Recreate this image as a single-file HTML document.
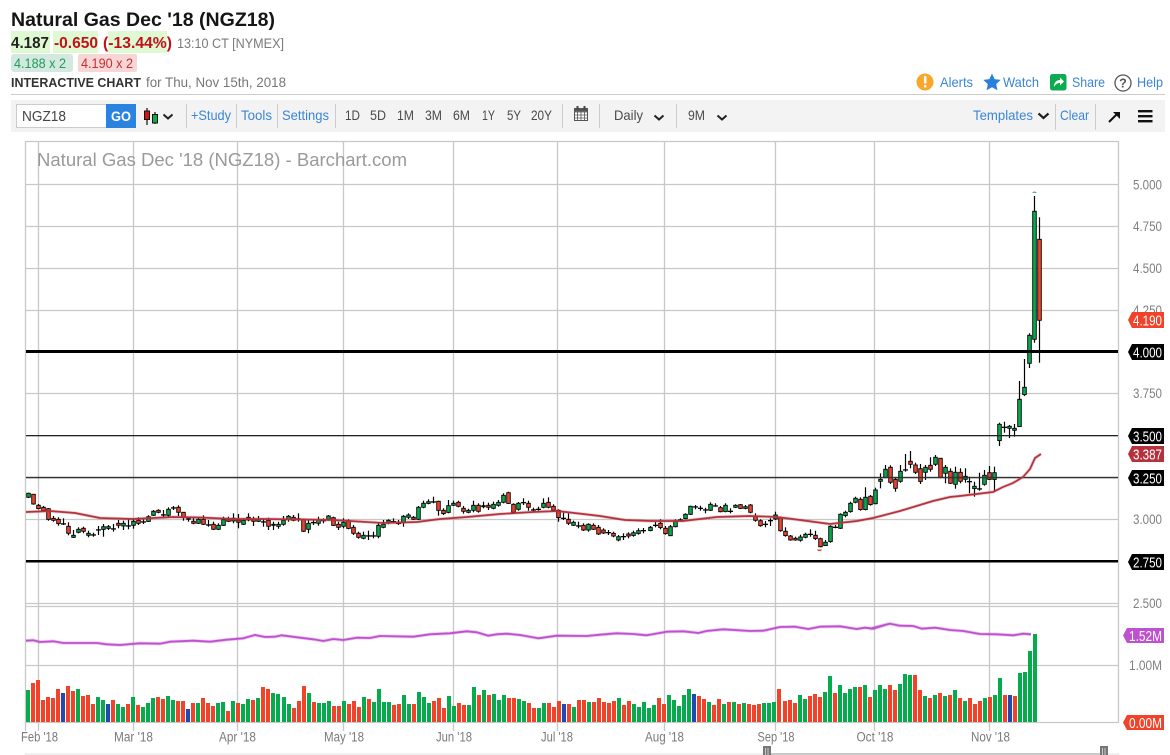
<!DOCTYPE html>
<html><head><meta charset="utf-8"><title>Natural Gas Dec '18 (NGZ18)</title>
<style>
html,body{margin:0;padding:0;background:#fff;width:1170px;height:755px;overflow:hidden}
svg{display:block;position:absolute;left:0;top:0}
text{font-family:"Liberation Sans",sans-serif;white-space:pre}
.b{fill:#3a86d8;font-size:14px}
.k{fill:#4a4a4a;font-size:14px}
.ax{fill:#808080;font-size:13.5px}
.dt{fill:#7a7a7a;font-size:13.5px;text-anchor:middle}
.tg{fill:#fff;font-size:14.5px;text-anchor:middle}
</style></head><body>
<svg id="s" width="1170" height="755" viewBox="0 0 1170 755" xmlns="http://www.w3.org/2000/svg">
<!-- header -->
<text x="11" y="26" font-size="19.5" font-weight="700" fill="#151515" textLength="264" lengthAdjust="spacingAndGlyphs">Natural Gas Dec '18 (NGZ18)</text>
<rect x="11" y="31" width="39" height="22" fill="#dff9d3"/>
<rect x="53" y="31" width="45" height="22" fill="#dff9d3"/>
<rect x="108" y="31" width="59" height="22" fill="#dff9d3"/>
<text x="11" y="48" font-size="16" font-weight="700" fill="#222" textLength="38" lengthAdjust="spacingAndGlyphs">4.187</text>
<text x="54" y="48" font-size="16" font-weight="700" fill="#c1111a" textLength="44" lengthAdjust="spacingAndGlyphs">-0.650</text>
<text x="103" y="48" font-size="16" font-weight="700" fill="#c1111a" textLength="69" lengthAdjust="spacingAndGlyphs">(-13.44%)</text>
<text x="177" y="48" font-size="13.5" fill="#7a7a7a" textLength="107" lengthAdjust="spacingAndGlyphs">13:10 CT [NYMEX]</text>
<rect x="11" y="54" width="62" height="18" rx="3" fill="#d3e8de"/>
<rect x="78" y="54" width="59" height="18" rx="2" fill="#f7d6d6"/>
<text x="14" y="68" font-size="14" fill="#1e9e57" textLength="52" lengthAdjust="spacingAndGlyphs">4.188 x 2</text>
<text x="81" y="68" font-size="14" fill="#c43030" textLength="52" lengthAdjust="spacingAndGlyphs">4.190 x 2</text>
<text x="11" y="87" font-size="12.5" font-weight="700" fill="#333" textLength="130" lengthAdjust="spacingAndGlyphs">INTERACTIVE CHART</text>
<text x="146" y="87" font-size="13.5" fill="#777" textLength="140" lengthAdjust="spacingAndGlyphs">for Thu, Nov 15th, 2018</text>
<!-- top right -->
<circle cx="925" cy="82" r="8.5" fill="#f9a72b"/>
<rect x="924" y="76" width="2.4" height="7.5" fill="#fff"/><rect x="924" y="85" width="2.4" height="2.4" fill="#fff"/>
<text x="940" y="87" class="b" textLength="33" lengthAdjust="spacingAndGlyphs">Alerts</text>
<path d="M992 73.5l2.6 5.6 6.1.8-4.5 4.2 1.2 6.1-5.4-3-5.4 3 1.2-6.1-4.5-4.2 6.1-.8z" fill="#2b7fdc"/>
<text x="1003" y="87" class="b" textLength="36" lengthAdjust="spacingAndGlyphs">Watch</text>
<rect x="1050" y="74" width="16.5" height="16.5" rx="2.5" fill="#0cab50"/>
<path d="M1054 87c0-4.500 2.500-7 6-7v-2.500l4 4-4 4V83c-2.500 0-4.500 1-6 4z" fill="#fff"/>
<text x="1072" y="87" class="b" textLength="33" lengthAdjust="spacingAndGlyphs">Share</text>
<circle cx="1123" cy="83" r="8" fill="none" stroke="#555" stroke-width="1.3"/>
<text x="1123" y="87.500" font-size="12.5" font-weight="700" fill="#555" text-anchor="middle">?</text>
<text x="1137" y="87" class="b" textLength="26" lengthAdjust="spacingAndGlyphs">Help</text>
<rect x="11" y="94" width="1154" height="1" fill="#ccc"/>
<!-- toolbar -->
<rect x="11" y="100" width="1154" height="32" fill="#f3f3f3"/>
<rect x="16.500" y="104.500" width="90" height="23" fill="#fff" stroke="#ccc"/>
<text x="22" y="121" font-size="15" fill="#444" textLength="44" lengthAdjust="spacingAndGlyphs">NGZ18</text>
<rect x="106" y="104" width="30" height="24" fill="#2b83e0"/>
<text x="111" y="121" font-size="13.5" font-weight="700" fill="#fff" textLength="20" lengthAdjust="spacingAndGlyphs">GO</text>
<path d="M147 108v17M155 112v12" stroke="#111" stroke-width="1.200"/>
<rect x="144.500" y="111" width="5" height="8.500" fill="#d4140f" stroke="#111"/>
<rect x="152.500" y="114.500" width="5" height="8.500" fill="#0cab50" stroke="#111"/>
<path id="chev" d="M163.500 114.500l4.500 4 4.500-4" fill="none" stroke="#222" stroke-width="2"/>
<g fill="#ccc">
<rect x="186" y="104" width="1" height="24"/><rect x="236" y="104" width="1" height="24"/><rect x="277" y="104" width="1" height="24"/><rect x="335" y="104" width="1" height="24"/>
<rect x="562" y="104" width="1" height="24"/><rect x="599" y="104" width="1" height="24"/><rect x="676" y="104" width="1" height="24"/><rect x="1055" y="104" width="1" height="26"/><rect x="1095" y="104" width="1" height="26"/>
</g>
<text x="191" y="120" class="b" textLength="40" lengthAdjust="spacingAndGlyphs">+Study</text>
<text x="241" y="120" class="b" textLength="31" lengthAdjust="spacingAndGlyphs">Tools</text>
<text x="282" y="120" class="b" textLength="47" lengthAdjust="spacingAndGlyphs">Settings</text>
<text x="345" y="120" class="k" textLength="15" lengthAdjust="spacingAndGlyphs">1D</text>
<text x="370" y="120" class="k" textLength="16" lengthAdjust="spacingAndGlyphs">5D</text>
<text x="397" y="120" class="k" textLength="17" lengthAdjust="spacingAndGlyphs">1M</text>
<text x="425" y="120" class="k" textLength="17" lengthAdjust="spacingAndGlyphs">3M</text>
<text x="453" y="120" class="k" textLength="17" lengthAdjust="spacingAndGlyphs">6M</text>
<text x="482" y="120" class="k" textLength="13" lengthAdjust="spacingAndGlyphs">1Y</text>
<text x="507" y="120" class="k" textLength="14" lengthAdjust="spacingAndGlyphs">5Y</text>
<text x="531" y="120" class="k" textLength="21" lengthAdjust="spacingAndGlyphs">20Y</text>
<rect x="574.500" y="108.500" width="13" height="12" fill="#fff" stroke="#555"/>
<path d="M574.500 112h13v-3.500h-13zM577.500 112v8.500M581 112v8.500M584.500 112v8.500M574.500 115h13M574.500 118h13" fill="none" stroke="#555" stroke-width=".8"/>
<rect x="574.500" y="108.500" width="13" height="3" fill="#555"/>
<rect x="576.500" y="106" width="2" height="3.500" fill="#444"/><rect x="583.500" y="106" width="2" height="3.500" fill="#444"/>
<text x="614" y="120" class="k" textLength="29" lengthAdjust="spacingAndGlyphs">Daily</text>
<path d="M654.500 115.500l4.500 4 4.500-4" fill="none" stroke="#222" stroke-width="2"/>
<text x="688" y="120" class="k" textLength="17" lengthAdjust="spacingAndGlyphs">9M</text>
<path d="M717.500 115.500l4.500 4 4.500-4" fill="none" stroke="#222" stroke-width="2"/>
<text x="973" y="120" class="b" textLength="60" lengthAdjust="spacingAndGlyphs">Templates</text>
<path d="M1038.500 113.500l5 4.500 5-4.500" fill="none" stroke="#222" stroke-width="2.200"/>
<text x="1060" y="120" class="b" textLength="29" lengthAdjust="spacingAndGlyphs">Clear</text>
<path d="M1109 122l8.500-8.500" stroke="#111" stroke-width="2"/><path d="M1120 112v7l-7-7z" fill="#111"/>
<rect x="1138" y="110" width="14.500" height="2.400" fill="#111"/><rect x="1138" y="115" width="14.500" height="2.400" fill="#111"/><rect x="1138" y="120" width="14.500" height="2.400" fill="#111"/>
<!-- chart grid -->
<g id="grid" fill="none" stroke="#c8c8c8" stroke-width="1.300">
<path d="M25.500 141.500H1118.500V722.500H25.500Z"/>
<path d="M26 184.500H1118M26 226.500H1118M26 268.500H1118M26 310.500H1118M26 393.500H1118M26 519.500H1118M26 603.500H1118M26 606.500H1118M26 665.500H1118"/>
<path d="M38.500 141V731M133.500 141V731M237.500 141V731M343.500 141V731M453.500 141V731M557.500 141V731M664.500 141V731M775.500 141V731M874.500 141V731M989.500 141V731M25.500 722V731"/>
</g>
<text x="37" y="166" font-size="18.500" fill="#9a9a9a" textLength="370" lengthAdjust="spacingAndGlyphs">Natural Gas Dec '18 (NGZ18) - Barchart.com</text>
<g id="vol"></g>
<path id="pu1" fill="none" stroke="#bf50cf" stroke-opacity=".3" stroke-width="3.500" stroke-linejoin="round"/>
<path id="pu" fill="none" stroke="#bf50cf" stroke-width="1.800" stroke-linejoin="round"/>
<g id="cd"></g>
<!-- key levels -->
<rect x="26" y="350" width="1092" height="3" fill="#000"/>
<rect x="26" y="435" width="1092" height="1.300" fill="#222"/>
<rect x="26" y="476.800" width="1092" height="1.500" fill="#333"/>
<rect x="26" y="560" width="1092" height="2.500" fill="#000"/>
<path id="ma1" fill="none" stroke="#b5323c" stroke-opacity=".25" stroke-width="3.200"/>
<path id="ma" fill="none" stroke="#b5323c" stroke-width="1.700"/>
<path d="M1032 192.800q2.500-2.500 5 0z" fill="#12a854"/>
<path d="M817 549.500h5l-1 1.500h-3z" fill="#f0432a"/>
<!-- axis labels -->
<text x="1133" y="189.500" class="ax" textLength="29" lengthAdjust="spacingAndGlyphs">5.000</text>
<text x="1133" y="231" class="ax" textLength="29" lengthAdjust="spacingAndGlyphs">4.750</text>
<text x="1133" y="273" class="ax" textLength="29" lengthAdjust="spacingAndGlyphs">4.500</text>
<text x="1133" y="315" class="ax" textLength="29" lengthAdjust="spacingAndGlyphs">4.250</text>
<text x="1133" y="398" class="ax" textLength="29" lengthAdjust="spacingAndGlyphs">3.750</text>
<text x="1133" y="524" class="ax" textLength="29" lengthAdjust="spacingAndGlyphs">3.000</text>
<text x="1133" y="608" class="ax" textLength="29" lengthAdjust="spacingAndGlyphs">2.500</text>
<text x="1129" y="670" class="ax" textLength="33" lengthAdjust="spacingAndGlyphs">1.00M</text>
<path d="M1128 320l4-8h32v16h-32z" fill="#f0432a"/>
<text x="1147.500" y="325.300" class="tg" textLength="29" lengthAdjust="spacingAndGlyphs">4.190</text>
<path d="M1128 352l4-8h32v16h-32z" fill="#000"/>
<text x="1147.500" y="357.300" class="tg" textLength="29" lengthAdjust="spacingAndGlyphs">4.000</text>
<path d="M1128 436l4-8h32v16h-32z" fill="#000"/>
<text x="1147.500" y="441.300" class="tg" textLength="29" lengthAdjust="spacingAndGlyphs">3.500</text>
<path d="M1128 454l4-8h32v16h-32z" fill="#b5323c"/>
<text x="1147.500" y="459.300" class="tg" textLength="29" lengthAdjust="spacingAndGlyphs">3.387</text>
<path d="M1128 478l4-8h32v16h-32z" fill="#000"/>
<text x="1147.500" y="483.300" class="tg" textLength="29" lengthAdjust="spacingAndGlyphs">3.250</text>
<path d="M1128 562l4-8h32v16h-32z" fill="#000"/>
<text x="1147.500" y="567.300" class="tg" textLength="29" lengthAdjust="spacingAndGlyphs">2.750</text>
<path d="M1123 635.500l4-7.500h37v15h-37z" fill="#bf50cf"/>
<text x="1145.500" y="640.800" class="tg" textLength="33" lengthAdjust="spacingAndGlyphs">1.52M</text>
<path d="M1123 722.500l4-7.500h37v15h-37z" fill="#f0432a"/>
<text x="1145.500" y="727.800" class="tg" textLength="33" lengthAdjust="spacingAndGlyphs">0.00M</text>
<text x="39.500" y="741.500" class="dt" textLength="37" lengthAdjust="spacingAndGlyphs">Feb '18</text>
<text x="133.500" y="741.500" class="dt" textLength="39" lengthAdjust="spacingAndGlyphs">Mar '18</text>
<text x="237.500" y="741.500" class="dt" textLength="37" lengthAdjust="spacingAndGlyphs">Apr '18</text>
<text x="344" y="741.500" class="dt" textLength="40" lengthAdjust="spacingAndGlyphs">May '18</text>
<text x="454" y="741.500" class="dt" textLength="36" lengthAdjust="spacingAndGlyphs">Jun '18</text>
<text x="557" y="741.500" class="dt" textLength="32" lengthAdjust="spacingAndGlyphs">Jul '18</text>
<text x="664.500" y="741.500" class="dt" textLength="39" lengthAdjust="spacingAndGlyphs">Aug '18</text>
<text x="776" y="741.500" class="dt" textLength="37" lengthAdjust="spacingAndGlyphs">Sep '18</text>
<text x="875" y="741.500" class="dt" textLength="37" lengthAdjust="spacingAndGlyphs">Oct '18</text>
<text x="990.500" y="741.500" class="dt" textLength="39" lengthAdjust="spacingAndGlyphs">Nov '18</text>
<!-- scrollbar -->
<rect x="25" y="753" width="1094" height="2" fill="#f1f1f1"/>
<rect x="770" y="753" width="334" height="2" fill="#c9c9c9"/>
<rect x="763" y="746" width="8" height="9" fill="#777"/><rect x="1100" y="746" width="8" height="9" fill="#777"/>
<path d="M765.500 748v7M768 748v7M1102.500 748v7M1105 748v7" stroke="#ddd" stroke-width=".8"/>
</svg>
<script>
var C={g:'#05ab4c',r:'#f0432a',b:'#2149b0',d:'#000'};
function el(p,n,a){var e=document.createElementNS('http://www.w3.org/2000/svg',n);for(var k in a)e.setAttribute(k,a[k]);p.appendChild(e);}
/* volume */
var v="g270 r249 r240 r300 r291 r294 r267 b279 r258 r273 g267 r288 r285 r312 g291 g300 b312 r300 g312 g321 r312 g291 r315 g321 g309 g294 r291 r297 g288 g300 r303 r303 b327 r309 g309 r294 r309 r318 g309 g306 r333 g303 r309 g312 g297 r300 g294 r261 r267 g279 g282 g291 g312 r324 r303 "+
"r258 g279 r306 g309 g309 g303 r318 r318 g303 r312 r303 r321 g291 r297 g306 g267 g306 g306 r315 r312 g285 g312 r312 g276 g291 g309 r303 r294 r324 g288 g318 r309 r315 g315 g261 r285 g270 r285 g282 g300 g285 r294 r294 g297 g303 r309 r324 g324 g309 r309 r321 r303 b312 r312 g321 r300 r300 g306 r306 r294 "+
"r306 r309 r303 g294 r315 r303 g312 g321 g306 g324 g315 r294 r312 g285 g300 g318 g285 g267 b282 r288 r297 g306 r315 r297 g312 r306 g306 r312 g309 r312 r315 r312 g309 g309 g306 r267 r303 r300 r309 g285 g297 r288 r282 r291 g276 g228 r279 g255 g279 g267 g261 r261 g255 r291 g270 g255 g267 r255 r270 g252 "+
"g222 g225 r225 r270 g288 r294 g285 r279 g288 r285 g270 r294 g303 r294 r312 r303 g294 r291 g285 g234 r285 b285 r288 g219 g216 g153 g102";
v=v.split(' ');
var vg=document.getElementById('vol'),st=(1035-28)/(v.length-1);
v.forEach(function(s,i){var h=(366-(+s.slice(1)))/3;el(vg,'rect',{x:Math.round(28+i*st-2),y:(722-h).toFixed(1),width:4,height:h.toFixed(1),fill:C[s[0]]});});
/* candles: colour top,bottom,wickTop,wickBottom in 3x crop units */
var G=[
[0,480,85,"g40,52,38,54 r43,72,42,74 r76,86,72,88 r82,92,78,95 r86,118,84,122 r115,121,108,125 r118,131,112,137 d130,133,115,135 r139,160,127,166 g166,172,150,174 g148,157,142,160 r145,154,140,160 g160,166,152,172 d163,166,158,170 d148,150,138,165 g140,148,132,170 g140,145,135,150 d145,148,132,155 r130,136,120,145 g130,138,122,150 d136,138,118,148 g124,136,118,146 r121,130,112,135 d124,127,118,132 g110,124,106,126 g94,106,90,108 r91,97,88,100 d103,106,90,115 g88,106,82,110 d82,85,78,90 r82,97,76,108 r97,112,97,122 r115,118,110,125 r124,130,112,133 g118,130,112,132 r118,133,106,135 d133,136,120,140 r133,148,125,150 g136,148,130,150 g119,136,110,138 r118,124,110,126 g115,123,100,130 r120,127,102,145 g121,133,115,135 r112,120,100,124 r118,124,110,138 g118,124,108,126 d124,127,115,140 r121,139,113,150 g133,136,125,150 g133,139,125,146 g121,133,108,137 g109,118,105,125 r112,121,105,124 d115,118,100,125"],
[300,470,10,"r148,184,146,186 g160,178,150,190 d156,159,150,165 g150,160,140,167 d150,152,145,160 g138,148,135,152 r143,166,140,168 r163,172,155,180 g157,169,145,175 r152,175,148,178 r172,190,165,195 r190,202,185,206 g196,205,185,208 d196,199,182,210 d196,199,185,205 g166,199,160,205 g163,172,150,175 g151,157,148,163 d153,155,145,160 d158,160,150,165 g139,157,135,170 g135,142,130,147 r142,148,138,150 g112,148,108,150 g100,112,92,115 g95,100,88,103 d94,97,80,100 r94,121,92,137 r121,131,115,135 g107,127,90,130 g100,106,92,108 r97,109,92,112 r115,124,108,131 g121,127,116,130 g106,121,92,127 r106,124,100,128 g107,110,95,115 r106,112,98,120 g103,115,95,118 g97,106,90,110 g76,97,70,100 r68,100,65,102 r103,127,100,130 g100,118,96,122 d96,99,85,105 r100,112,92,122 d118,121,113,124 d116,118,110,122 g100,112,85,115 r97,112,82,115 r109,121,103,125 r121,143,118,155 d143,146,128,150 r148,160,130,165 g157,166,152,168 d166,169,155,175 r166,180,160,183 g163,180,160,185 r166,178,160,180 r172,192,165,195"],
[603,500,0,"r90,99,85,102 d96,99,90,105 r100,108,95,112 g110,120,105,124 d108,110,100,120 r102,108,97,115 g98,106,92,110 g92,100,85,104 d90,93,84,100"],
[650,440,0,"g262,272,258,274 d254,256,246,262 r250,263,238,268 r265,281,258,284 g260,287,255,288 g242,260,238,262 d238,241,235,245 g223,236,220,238 g199,223,197,225 d199,201,195,208 d203,206,197,212 d208,210,203,220 g193,211,187,213 d196,198,190,200 r203,215,198,217 g196,215,190,217 d212,214,205,220 g196,202,193,204 r194,205,192,207 g200,205,195,208 r195,217,192,220 r228,241,220,245 r242,257,238,260 d251,254,243,262 d240,243,235,258 g225,237,215,240 r233,272,230,275 r274,287,262,290 r288,300,285,302 r295,300,290,302 g291,301,284,305 g283,292,278,295 d281,284,268,290 r286,296,272,300 r296,320,293,322 g307,317,300,318 g259,305,256,308 d260,262,255,265 g223,265,220,267 g217,227,212,232 g190,215,185,218 g175,187,170,190 r178,209,172,212 g172,209,142,211 r169,194,165,197 g150,191,143,193 g118,124,100,145 g88,112,75,115 r82,127,76,132 r118,145,112,155 g94,124,75,128 d88,90,42,95 r64,73,33,85 r75,97,68,102 r86,124,72,132 g82,97,75,120 r76,88,52,95 g52,73,45,78 r55,112,55,115 g82,100,75,130 r94,130,85,132 g97,133,80,146 r97,124,85,130 g109,118,85,128"],
[960,370,28,"d333,336,320,370 g349,356,335,380 d355,357,308,362 g316,343,300,347 r308,328,288,330 g308,328,290,365 g163,212,158,228 d170,173,155,188 g169,175,165,204 g175,181,162,200 g88,170,33,170 g52,74,-33,78"],
[960,170,208,"g496,580,490,594 g124,508,78,518 r208,451,142,578"]
];
var cg=document.getElementById('cd');
G.forEach(function(g){g[3].split(' ').forEach(function(s,i){
 var c=s[0],a=s.slice(1).split(',').map(Number),x=Math.round(g[0]+(g[2]+i*15)/3)+.5,f=function(n){return (g[1]+n/3).toFixed(1)};
 el(cg,'line',{x1:x,x2:x,y1:f(a[2]),y2:f(a[3]),stroke:'#000','stroke-width':1.2});
 if(c=='d'){el(cg,'rect',{x:x-2.5,y:f(a[0]),width:5,height:1.3,fill:'#000'});}
 else{el(cg,'rect',{x:x-1.8,y:f(a[0]),width:3.6,height:((a[1]-a[0])/3).toFixed(1),fill:C[c],stroke:'#000','stroke-width':.9});}
});});
/* moving average */
var ma="26,512 50,511 75,513 100,518 133,519 173,517 200,517.5 233,519 267,519 300,519.5 333,520 383,523 417,522 440,519 467,517 500,514 533,512 557,511 583,514 600,516 625,520 650,521 683,521 717,517 750,516 777,517 800,520 830,524 857,521 873,518 900,511 933,501 950,497 960,496 993,492 1003,487 1013,483 1023,477 1030,469 1035,458 1041,454";
document.getElementById('ma').setAttribute('d','M'+ma.replace(/ /g,'L'));
document.getElementById('ma1').setAttribute('d','M'+ma.replace(/ /g,'L'));
/* purple average volume line */
var p=[[0,[78,122,100,121,120,126,160,124,190,129,240,129,290,129,320,133,360,135,420,130,480,131,510,125,580,122,630,125,680,119,730,115,765,105,795,111,825,110,845,106,900,113]],
[300,[40,118,70,123,100,117,130,120,170,113,210,114,240,108,340,110,390,103,450,100,500,94,530,97,565,107,590,103,620,101,660,105,715,115,770,107,860,108,900,104]],
[600,[50,100,100,102,140,106,200,95,250,94,295,99,320,93,370,88,450,93,490,92,540,81,585,80,625,87,660,80,720,79,770,87,795,83,820,86,865,72]],
[870,[0,86,60,71,90,77,130,78,155,86,195,83,240,90,280,93,330,102,380,103,430,106,460,101,483,103]]];
var pts=[];p.forEach(function(g){for(var i=0;i<g[1].length;i+=2)pts.push((g[0]+g[1][i]/3).toFixed(1)+','+(600+g[1][i+1]/3).toFixed(1));});
document.getElementById('pu').setAttribute('d','M'+pts.join('L'));
document.getElementById('pu1').setAttribute('d','M'+pts.join('L'));
</script>
</body></html>
